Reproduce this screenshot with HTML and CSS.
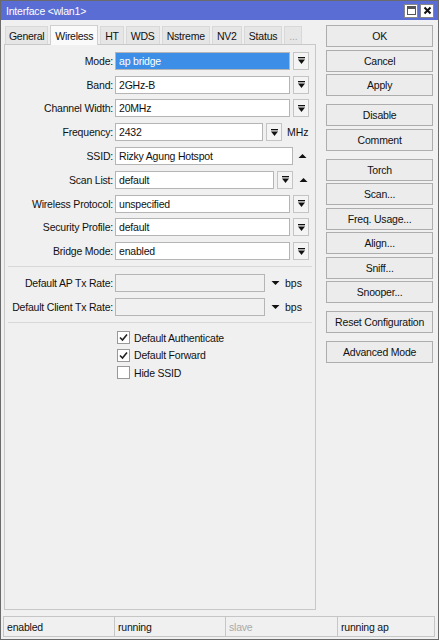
FILE: index.html
```html
<!DOCTYPE html>
<html>
<head>
<meta charset="utf-8">
<link rel="stylesheet" href="styles.css">
</head>
<body>
<div class="window">
  <div class="titlebar">
    <span class="title">Interface &lt;wlan1&gt;</span>
    <div class="tbtns">
      <span class="tbtn"><svg width="11" height="11" viewBox="0 0 11 11"><rect x="1.5" y="1.5" width="8" height="8" fill="#fff" stroke="#555"/><rect x="2" y="2" width="7" height="2" fill="#555"/></svg></span>
      <span class="tbtn"><svg width="11" height="11" viewBox="0 0 11 11"><path d="M2.5 2.5 L8.5 8.5 M8.5 2.5 L2.5 8.5" stroke="#111" stroke-width="2"/></svg></span>
    </div>
  </div>
  <div class="main">
    <div class="left">
      <div class="tabs">
        <span class="tab first">General</span>
        <span class="tab active">Wireless</span>
        <span class="tab">HT</span>
        <span class="tab">WDS</span>
        <span class="tab">Nstreme</span>
        <span class="tab">NV2</span>
        <span class="tab">Status</span>
        <span class="tab dim">...</span>
      </div>
      <div class="panel">
        <div class="row"><span class="lbl">Mode:</span><span class="field sel w175">ap bridge</span><span class="dd"><svg width="9" height="9" viewBox="0 0 9 9"><rect x="1" y="1" width="7" height="1.3" fill="#111"/><path d="M1 3.5 H8 L4.5 8 Z" fill="#111"/></svg></span></div>
        <div class="row"><span class="lbl">Band:</span><span class="field w175">2GHz-B</span><span class="dd"><svg width="9" height="9" viewBox="0 0 9 9"><rect x="1" y="1" width="7" height="1.3" fill="#111"/><path d="M1 3.5 H8 L4.5 8 Z" fill="#111"/></svg></span></div>
        <div class="row"><span class="lbl">Channel Width:</span><span class="field w175">20MHz</span><span class="dd"><svg width="9" height="9" viewBox="0 0 9 9"><rect x="1" y="1" width="7" height="1.3" fill="#111"/><path d="M1 3.5 H8 L4.5 8 Z" fill="#111"/></svg></span></div>
        <div class="row"><span class="lbl">Frequency:</span><span class="field w148">2432</span><span class="dd"><svg width="9" height="9" viewBox="0 0 9 9"><rect x="1" y="1" width="7" height="1.3" fill="#111"/><path d="M1 3.5 H8 L4.5 8 Z" fill="#111"/></svg></span><span class="unit">MHz</span></div>
        <div class="row"><span class="lbl">SSID:</span><span class="field w178">Rizky Agung Hotspot</span><span class="up"><svg width="9" height="6" viewBox="0 0 9 6"><path d="M0.5 5 H8.5 L4.5 1 Z" fill="#111"/></svg></span></div>
        <div class="row"><span class="lbl">Scan List:</span><span class="field w159">default</span><span class="dd"><svg width="9" height="9" viewBox="0 0 9 9"><rect x="1" y="1" width="7" height="1.3" fill="#111"/><path d="M1 3.5 H8 L4.5 8 Z" fill="#111"/></svg></span><span class="up up2"><svg width="9" height="6" viewBox="0 0 9 6"><path d="M0.5 5 H8.5 L4.5 1 Z" fill="#111"/></svg></span></div>
        <div class="row"><span class="lbl">Wireless Protocol:</span><span class="field w175">unspecified</span><span class="dd"><svg width="9" height="9" viewBox="0 0 9 9"><rect x="1" y="1" width="7" height="1.3" fill="#111"/><path d="M1 3.5 H8 L4.5 8 Z" fill="#111"/></svg></span></div>
        <div class="row"><span class="lbl">Security Profile:</span><span class="field w175">default</span><span class="dd"><svg width="9" height="9" viewBox="0 0 9 9"><rect x="1" y="1" width="7" height="1.3" fill="#111"/><path d="M1 3.5 H8 L4.5 8 Z" fill="#111"/></svg></span></div>
        <div class="row"><span class="lbl">Bridge Mode:</span><span class="field w175">enabled</span><span class="dd"><svg width="9" height="9" viewBox="0 0 9 9"><rect x="1" y="1" width="7" height="1.3" fill="#111"/><path d="M1 3.5 H8 L4.5 8 Z" fill="#111"/></svg></span></div>
        <div class="sep"></div>
        <div class="row"><span class="lbl">Default AP Tx Rate:</span><span class="field empty w150"></span><span class="down"><svg width="9" height="6" viewBox="0 0 9 6"><path d="M0.5 1 H8.5 L4.5 5 Z" fill="#111"/></svg></span><span class="unit">bps</span></div>
        <div class="row"><span class="lbl">Default Client Tx Rate:</span><span class="field empty w150"></span><span class="down"><svg width="9" height="6" viewBox="0 0 9 6"><path d="M0.5 1 H8.5 L4.5 5 Z" fill="#111"/></svg></span><span class="unit">bps</span></div>
        <div class="sep sep2"></div>
        <div class="checks">
          <div class="chk"><span class="box"><svg width="11" height="11" viewBox="0 0 11 11"><path d="M2 5.5 L4.5 8 L9 2.5" fill="none" stroke="#222" stroke-width="1.6"/></svg></span>Default Authenticate</div>
          <div class="chk"><span class="box"><svg width="11" height="11" viewBox="0 0 11 11"><path d="M2 5.5 L4.5 8 L9 2.5" fill="none" stroke="#222" stroke-width="1.6"/></svg></span>Default Forward</div>
          <div class="chk"><span class="box"></span>Hide SSID</div>
        </div>
      </div>
    </div>
    <div class="right">
      <span class="btn">OK</span>
      <span class="btn">Cancel</span>
      <span class="btn">Apply</span>
      <span class="btn gap">Disable</span>
      <span class="btn">Comment</span>
      <span class="btn gap">Torch</span>
      <span class="btn">Scan...</span>
      <span class="btn">Freq. Usage...</span>
      <span class="btn">Align...</span>
      <span class="btn">Sniff...</span>
      <span class="btn">Snooper...</span>
      <span class="btn gap">Reset Configuration</span>
      <span class="btn gap">Advanced Mode</span>
    </div>
  </div>
  <div class="status">
    <span class="seg s1">enabled</span>
    <span class="seg s2">running</span>
    <span class="seg s3 faded">slave</span>
    <span class="seg last">running ap</span>
  </div>
</div>
</body>
</html>
```

FILE: styles.css
```css
* { box-sizing: border-box; }
html, body { margin: 0; padding: 0; }
body {
  font-family: "Liberation Sans", Arial, sans-serif;
  font-size: 10.5px;
  color: #111;
}
.window {
  width: 439px;
  height: 640px;
  border: 1px solid #6a6a6a;
  background: #f0f0f0;
  display: flex;
  flex-direction: column;
}
.titlebar {
  height: 19px;
  background: #5a6dd4;
  color: #fff;
  display: flex;
  align-items: center;
  justify-content: space-between;
  padding: 0 4px 0 5px;
  flex: none;
}
.title { font-size: 10.5px; letter-spacing: -0.2px; }
.tbtns { display: flex; gap: 2px; }
.tbtn {
  width: 14px; height: 14px;
  background: #fff;
  border: 1px solid #888;
  display: flex; align-items: center; justify-content: center;
}
.main {
  flex: 1;
  display: flex;
  padding: 4px 5px 6px 3px;
  gap: 10px;
}
.left { width: 313px; display: flex; flex-direction: column; }
.tabs { display: flex; height: 20px; align-items: flex-end; padding-left: 1px; gap: 2px; }
.tab {
  height: 18px;
  padding: 0 4px;
  background: #e6e6e6;
  border: 1px solid #d8d8d8;
  border-bottom: none;
  display: flex; align-items: center;
  letter-spacing: -0.2px;
}
.tab.first { padding: 0 3px; letter-spacing: -0.3px; }
.tab.active {
  height: 20px;
  background: #fafafa;
  border-color: #cfcfcf;
  padding: 0 4px;
  letter-spacing: -0.3px;
  margin-bottom: -1px;
  position: relative;
  z-index: 1;
}
.tab.dim { color: #aaa; padding: 0 4px; }
.panel {
  flex: 1;
  border: 1px solid #c8c8c8;
  background: #f0f0f0;
  padding: 4px 0 0 0;
}
.row {
  display: flex;
  align-items: center;
  height: 23.8px;
}
.lbl {
  width: 110px;
  text-align: right;
  padding-right: 2px;
  letter-spacing: -0.2px;
  white-space: nowrap;
}
.field {
  height: 18px;
  background: #fff;
  border: 1px solid #b5b5b5;
  padding: 0 3px;
  display: flex; align-items: center;
  letter-spacing: -0.2px;
}
.field.sel { background: #3d8ee6; color: #fff; border-color: #b5b5b5; }
.field.empty { background: #f0f0f0; }
.w175 { width: 175px; }
.w148 { width: 148px; }
.w178 { width: 178px; }
.w159 { width: 159px; }
.w150 { width: 150px; }
.dd {
  width: 16px; height: 18px;
  margin-left: 3px;
  border: 1px solid #c4c4c4;
  background: #f4f4f4;
  display: flex; align-items: center; justify-content: center;
}
.up { margin-left: 5px; display: flex; align-items: center; }
.up2 { margin-left: 6px; }
.down { margin-left: 6px; display: flex; align-items: center; }
.unit { margin-left: 5px; }
.sep {
  height: 1px;
  background: #d8d8d8;
  margin: 3px 3px 4px 3px;
}
.sep2 { margin: 3px 3px 6px 3px; }
.checks { padding-left: 112px; }
.chk { display: flex; align-items: center; height: 17.5px; letter-spacing: -0.2px; }
.box {
  width: 13px; height: 13px;
  border: 1px solid #999;
  background: #fff;
  margin-right: 4px;
  display: flex; align-items: center; justify-content: center;
}
.right { width: 107px; display: flex; flex-direction: column; gap: 2.5px; padding-top: 1px; }
.btn {
  height: 22px;
  flex: none;
  border: 1px solid #adadad;
  background: #ececec;
  display: flex; align-items: center; justify-content: center;
  letter-spacing: -0.2px;
  white-space: nowrap;
}
.btn.gap { margin-top: 5.5px; }
.status {
  height: 23px;
  display: flex;
  padding: 0 3px 2px 2px;
  flex: none;
}
.seg {
  border: 1px solid #c6c6c6;
  border-right: none;
  padding-left: 3px;
  display: flex; align-items: center;
  background: #f0f0f0;
  letter-spacing: -0.2px;
}
.s1 { width: 111px; }
.s2 { width: 111px; }
.s3 { width: 112px; }
.seg.last { flex: 1; border-right: 1px solid #c6c6c6; }
.seg.faded { color: #aaa; }
```
